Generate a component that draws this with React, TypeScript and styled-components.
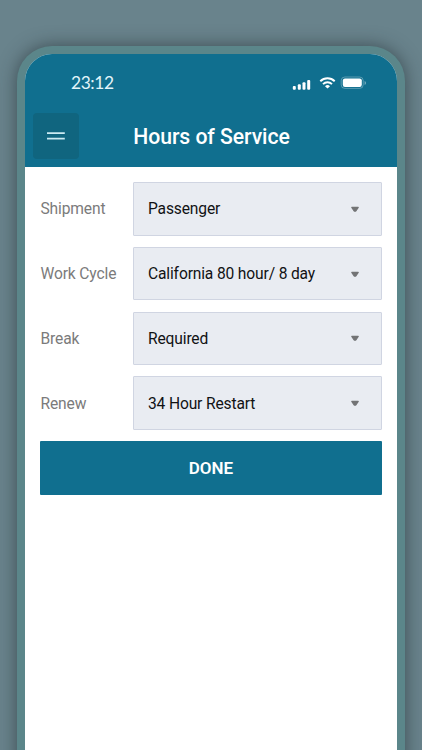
import React from "react";
import styled, { createGlobalStyle } from "styled-components";

const GlobalStyle = createGlobalStyle`
  *, *::before, *::after { box-sizing: border-box; }
  body { margin: 0; background: #69838c; overflow: hidden; }
  button { font: inherit; border: 0; padding: 0; cursor: pointer; }
`;

const Stage = styled.main`
  height: 750px;
  padding: 46px 17px 0;
  overflow: hidden;
  background: #69838c;
  font-family: Roboto, "Liberation Sans", sans-serif;
`;

const Phone = styled.div`
  height: 800px;
  padding: 8px 8px 0;
  border-radius: 35px;
  background: #5b868a;
  box-shadow: 0 0 18px rgba(35, 48, 52, 0.65);
`;

const Screen = styled.div`
  height: 100%;
  border-radius: 27px 27px 0 0;
  overflow: hidden;
  background: #fff;
`;

const Header = styled.header`
  height: 113px;
  background: #106f8f;
  color: #fff;
`;

const StatusBar = styled.div`
  height: 59px;
  padding: 0 30px 0 46px;
  display: flex;
  justify-content: space-between;
`;

const Clock = styled.time`
  font: 400 17.4px/58px Lato, sans-serif;
  letter-spacing: -0.4px;
  color: #e3f5fa;
`;

const StatusIcons = styled.svg`
  width: 76px;
  height: 16px;
  margin-top: 21px;
`;

const TitleBar = styled.div`
  height: 54px;
  padding: 0 8px;
  display: grid;
  grid-template-columns: 46px 1fr 46px;
`;

const MenuButton = styled.button`
  width: 46px;
  height: 46px;
  border-radius: 4px;
  background: #10657f;
  color: #cbeaf2;
`;

const MenuIcon = styled.svg`
  display: block;
  width: 46px;
  height: 46px;
`;

const Title = styled.h1`
  margin: 0;
  padding-left: 1px;
  text-align: center;
  font-size: 21.2px;
  letter-spacing: -0.06px;
  font-weight: 500;
  line-height: 48px;
  white-space: nowrap;
`;

const Form = styled.div`
  padding: 15px 15px 0;
  display: grid;
  row-gap: 11.2px;
`;

const Field = styled.div`
  height: 53.6px;
  display: grid;
  grid-template-columns: 93px 1fr;
  align-items: center;
`;

const Label = styled.span`
  padding: 1px 0 0 0.5px;
  color: #7b7b7b;
  font-size: 15.6px;
  letter-spacing: -0.14px;
  line-height: 20px;
`;

const Select = styled.button`
  height: 100%;
  padding: 1px 21px 0 14px;
  display: flex;
  align-items: center;
  justify-content: space-between;
  border: 1px solid #d0d5e2;
  border-radius: 1px;
  background: #e9ecf2;
  color: #111214;
  font-size: 15.6px;
  letter-spacing: -0.15px;
  line-height: 20px;
`;

const Caret = styled.svg`
  width: 10px;
  height: 7px;
`;

const DoneButton = styled.button`
  height: 53.6px;
  border-radius: 1px;
  background: #106f8f;
  color: #fff;
  font-size: 17px;
  font-weight: 600;
`;

const fields = [
  { label: "Shipment", value: "Passenger" },
  { label: "Work Cycle", value: "California 80 hour/ 8 day" },
  { label: "Break", value: "Required" },
  { label: "Renew", value: "34 Hour Restart" },
];

export default function App() {
  return (
    <Stage>
      <GlobalStyle />
      <Phone>
        <Screen>
          <Header>
            <StatusBar>
              <Clock>23:12</Clock>
              <StatusIcons viewBox="0 0 76 16" fill="#fff" aria-hidden="true">
                <rect x="1.8" y="11" width="3" height="3.8" rx="1" />
                <rect x="6.8" y="9.2" width="3" height="5.6" rx="1" />
                <rect x="11.5" y="7.2" width="3" height="7.6" rx="1" />
                <rect x="16.2" y="5" width="3" height="9.8" rx="1" />
                <g fill="none" stroke="#fff" strokeWidth="1.9">
                  <path d="M29.3 6.2a10.3 10.3 0 0 1 14.4 0" />
                  <path d="M32 9.1a6.5 6.5 0 0 1 9 0" />
                </g>
                <path d="M34 11.2a3.7 3.7 0 0 1 5 0L36.5 13.6z" />
                <rect x="50.2" y="2" width="22" height="11.4" rx="3.6" fill="none" stroke="#fff" strokeOpacity="0.3" />
                <rect x="51.8" y="3.4" width="19" height="8.6" rx="2.2" />
                <path d="M73.6 6v4q1.4-.6 1.4-2t-1.4-2z" opacity="0.45" />
              </StatusIcons>
            </StatusBar>
            <TitleBar>
              <MenuButton aria-label="Menu">
                <MenuIcon viewBox="0 0 46 46" stroke="currentColor" strokeWidth="1.8">
                  <path d="M14 20.2h17.8M14 25.7h17.8" />
                </MenuIcon>
              </MenuButton>
              <Title>Hours of Service</Title>
            </TitleBar>
          </Header>
          <Form>
            {fields.map(({ label, value }) => (
              <Field key={label}>
                <Label>{label}</Label>
                <Select aria-label={label}>
                  {value}
                  <Caret viewBox="0 0 10 7" aria-hidden="true">
                    <path d="M1.8 1.5h6.4L5.8 5H4.2z" fill="#737476" stroke="#737476" strokeWidth="1.3" strokeLinejoin="round" />
                  </Caret>
                </Select>
              </Field>
            ))}
            <DoneButton>DONE</DoneButton>
          </Form>
        </Screen>
      </Phone>
    </Stage>
  );
}
